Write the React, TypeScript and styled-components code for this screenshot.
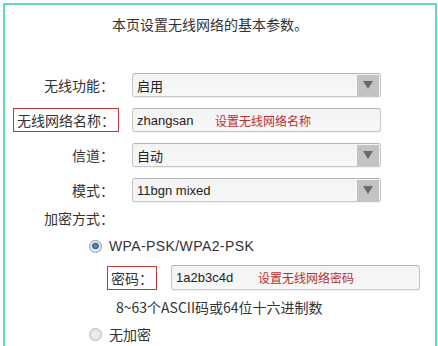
import React from 'react';
import styled, {createGlobalStyle} from "styled-components";

const GlobalStyle = createGlobalStyle`
  body {
    margin: 0;
    background: #ffffff;
    font-family: "Noto Sans CJK SC", "Liberation Sans", sans-serif;
    color: #333333;
  }
`

const Panel = styled.div`
  box-sizing: border-box;
  width: 434px;
  height: 343px;
  margin: 3px 0 0 3px;
  border: 2px solid #63d8c3;
  border-bottom: none;
  padding-top: 9px;
  overflow: hidden;
`

const Title = styled.div`
  font-size: 14px;
  line-height: 20px;
  text-align: center;
  padding-right: 20px;
`

const Form = styled.div`
  display: flex;
  flex-direction: column;
  gap: 11px;
  margin-top: 39px;
`

const Row = styled.div`
  display: grid;
  grid-template-columns: 114px 249px;
  column-gap: 13px;
  align-items: center;
  height: 24px;
`

const Label = styled.div<{$boxed?: boolean}>`
  justify-self: end;
  font-size: 14px;
  line-height: 20px;
  white-space: nowrap;
  padding: ${p => p.$boxed ? '1px 3px 1px 3px' : '0 5px 0 0'};
  border: ${p => p.$boxed ? '1px solid #b83a36' : 'none'};
`

const Field = styled.div`
  box-sizing: border-box;
  height: 24px;
  display: flex;
  align-items: center;
  border: 1px solid #c6c6c6;
  border-top-color: #b4b4b4;
  border-radius: 3px;
  background: linear-gradient(#f3f3f3, #f8f8f8);
  box-shadow: 0 1px 1px rgba(0, 0, 0, 0.06);
  padding-left: 4px;
  font-size: 13px;
`

const Value = styled.span`
  font-family: "Liberation Sans", "Noto Sans CJK SC", sans-serif;
  font-size: 13px;
  color: #222;
  flex: 1;
`

const FixedValue = styled(Value)<{$w: number}>`
  flex: none;
  width: ${p => p.$w}px;
`

const Hint = styled.span`
  font-size: 12px;
  color: #b8302c;
`

const Arrow = styled.div`
  width: 22px;
  height: 21px;
  margin-right: 1px;
  background: #c3c3c3;
  display: flex;
  align-items: center;
  justify-content: center;

  &::after {
    content: '';
    border-left: 5px solid transparent;
    border-right: 5px solid transparent;
    border-top: 8px solid #6a6a6a;
  }
`

const Section = styled.div`
  font-size: 14px;
  line-height: 20px;
  width: 109px;
  text-align: right;
  margin-top: 6px;
`

const Option = styled.div<{$top: number}>`
  display: flex;
  align-items: center;
  gap: 7px;
  margin: ${p => p.$top}px 0 0 84px;
  font-size: 14px;
  line-height: 20px;
`

const Radio = styled.span<{$checked?: boolean}>`
  box-sizing: border-box;
  width: 13px;
  height: 13px;
  border-radius: 50%;
  border: 1px solid ${p => p.$checked ? '#8a9aa8' : '#b9b9b9'};
  background: ${p => p.$checked
    ? 'radial-gradient(circle at 50% 45%, #5fa0d8 0, #2a5f96 3px, #dfe6ec 3.6px, #f4f4f4 100%)'
    : 'radial-gradient(circle, #f2f2f2 0, #dcdcdc 100%)'};
`

const Latin = styled.span`
  font-family: "Liberation Sans", sans-serif;
  font-size: 14px;
  letter-spacing: 0.4px;
  color: #333;
`

const PassRow = styled.div`
  display: flex;
  align-items: center;
  gap: 14px;
  margin: 9px 0 0 102px;
  height: 25px;
`

const PassField = styled(Field)`
  width: 249px;
  height: 25px;
`

const Note = styled.div`
  margin: 7px 0 0 111px;
  font-size: 14px;
  line-height: 20px;
`

const Select: React.FC<{value: string}> = ({value}) => (
  <Field>
    <Value>{value}</Value>
    <Arrow/>
  </Field>
)

export default function App() {
  return (
    <>
      <GlobalStyle/>
      <Panel>
        <Title>本页设置无线网络的基本参数。</Title>
        <Form>
          <Row>
            <Label>无线功能：</Label>
            <Select value="启用"/>
          </Row>
          <Row>
            <Label $boxed>无线网络名称：</Label>
            <Field>
              <FixedValue $w={78}>zhangsan</FixedValue>
              <Hint>设置无线网络名称</Hint>
            </Field>
          </Row>
          <Row>
            <Label>信道：</Label>
            <Select value="自动"/>
          </Row>
          <Row>
            <Label>模式：</Label>
            <Select value="11bgn mixed"/>
          </Row>
        </Form>
        <Section>加密方式：</Section>
        <Option $top={8}>
          <Radio $checked/>
          <Latin>WPA-PSK/WPA2-PSK</Latin>
        </Option>
        <PassRow>
          <Label $boxed>密码：</Label>
          <PassField>
            <FixedValue $w={82}>1a2b3c4d</FixedValue>
            <Hint>设置无线网络密码</Hint>
          </PassField>
        </PassRow>
        <Note>8~63个ASCII码或64位十六进制数</Note>
        <Option $top={7}>
          <Radio/>
          <span>无加密</span>
        </Option>
      </Panel>
    </>
  );
}
